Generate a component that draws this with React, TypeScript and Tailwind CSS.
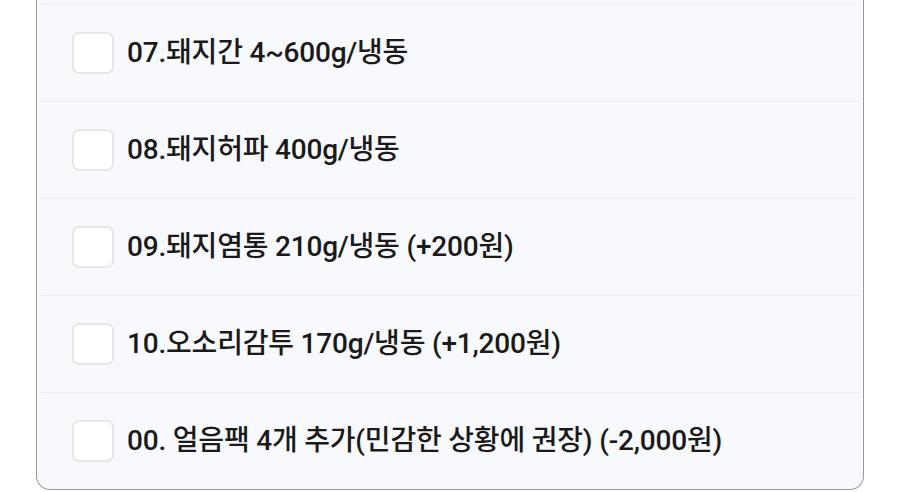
import React from 'react';

const items = [
  '07.돼지간 4~600g/냉동',
  '08.돼지허파 400g/냉동',
  '09.돼지염통 210g/냉동 (+200원)',
  '10.오소리감투 170g/냉동 (+1,200원)',
  '00. 얼음팩 4개 추가(민감한 상황에 권장) (-2,000원)',
];

const App: React.FC = () => {
  return (
    <div
      className="w-[900px] h-[492px] overflow-hidden bg-white"
      style={{ fontFamily: 'Roboto, "Noto Sans CJK KR", sans-serif' }}
    >
      <div className="mx-[36px] -mt-[6px] h-[496px] border-x-[1.5px] border-b-[1.5px] border-[#9a9a9a] rounded-b-[14px] bg-[#f8f9fc] pt-[10px] flex flex-col">
        {items.map((label) => (
          <label
            key={label}
            className="flex items-center h-[97px] px-[31px] gap-[13px] border-t border-[#eceef3] mx-[4px]"
          >
            <span className="w-[42px] h-[42px] shrink-0 rounded-[7px] border-2 border-[#e6e7ea] bg-white" />
            <span className="text-[28px] font-medium leading-none tracking-[-0.2px] text-[#1a1a1a]">{label}</span>
          </label>
        ))}
      </div>
    </div>
  );
};

export default App;
